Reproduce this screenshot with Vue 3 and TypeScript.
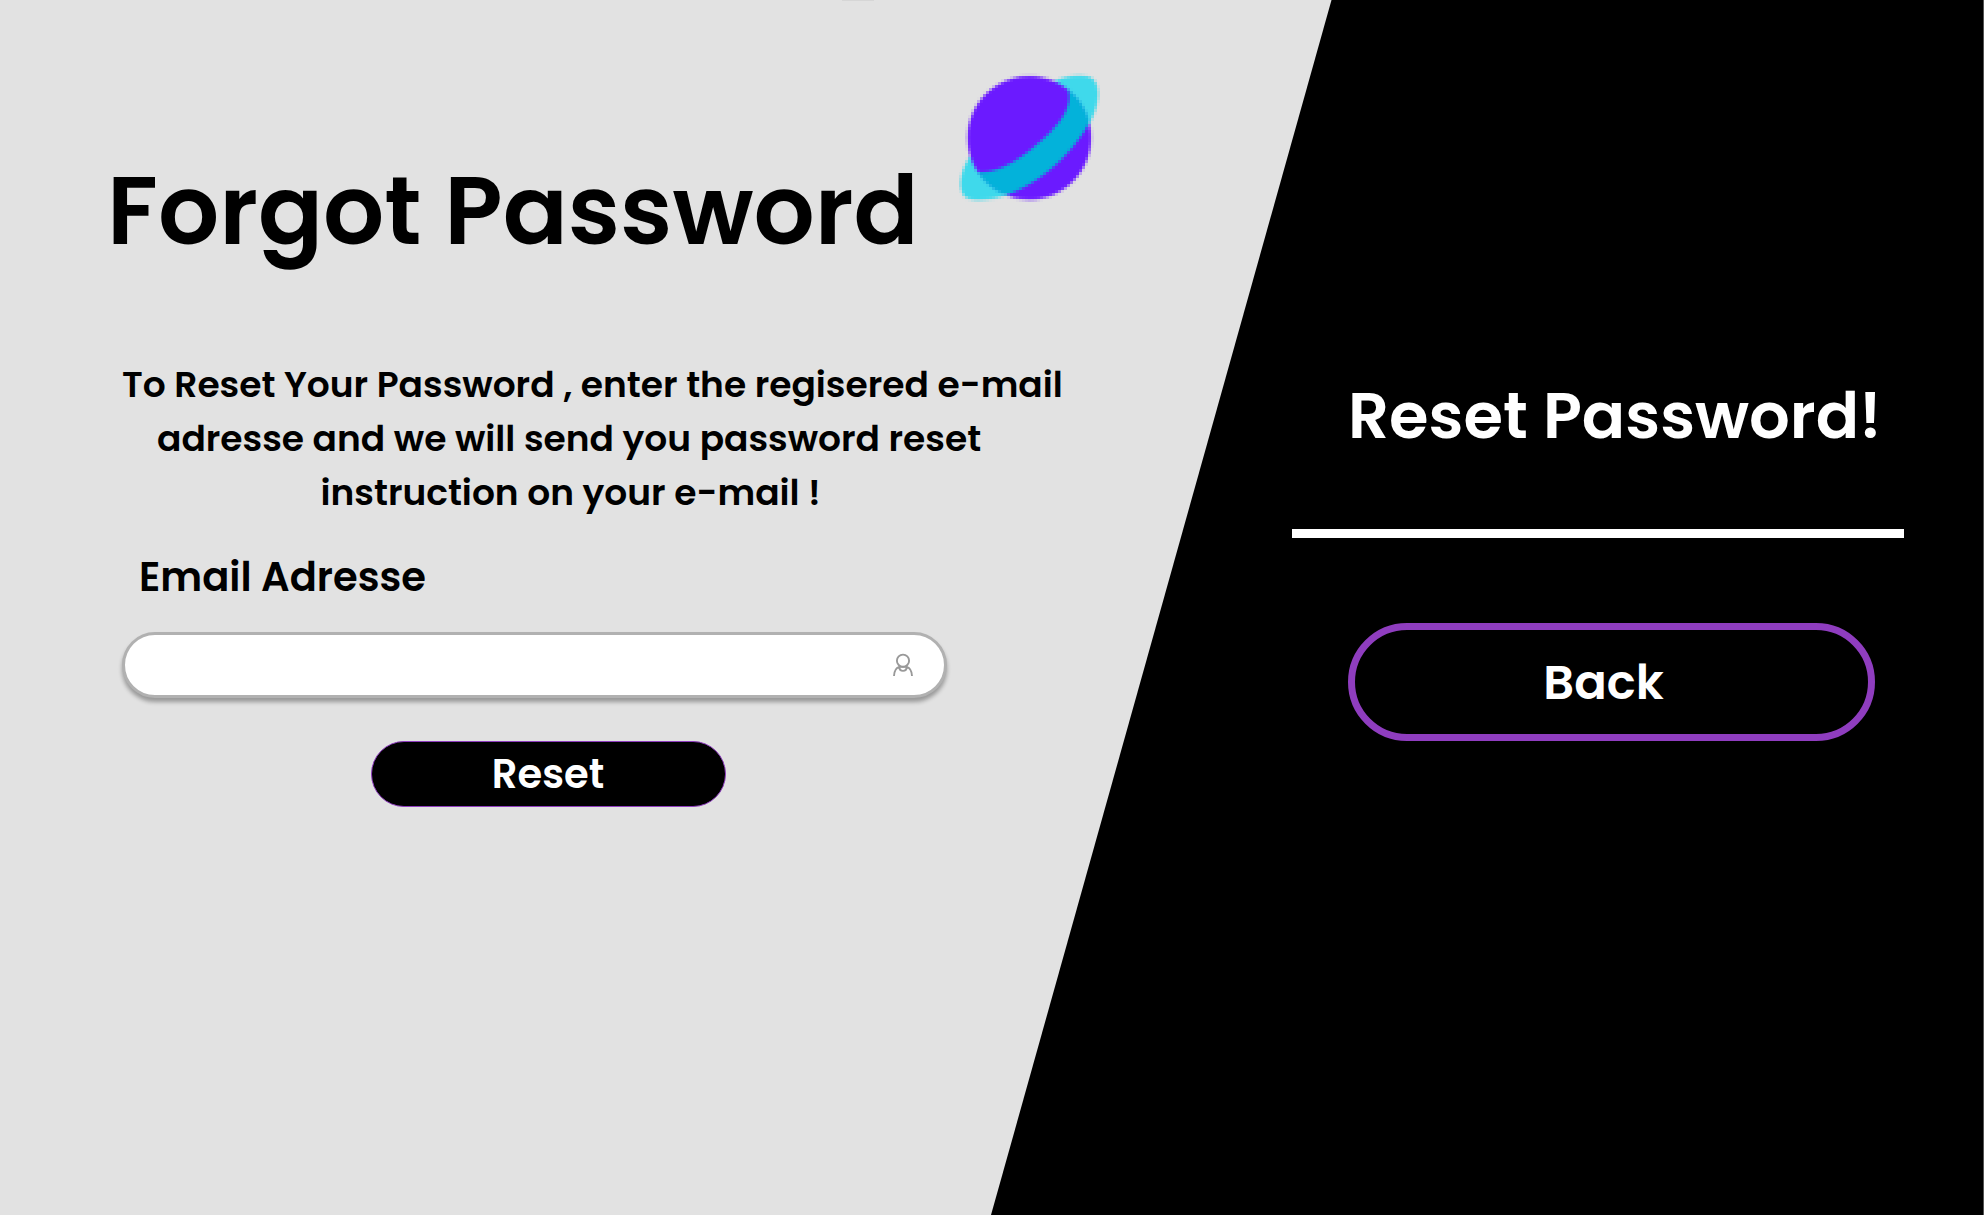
<script setup lang="ts">
import { ref } from 'vue'

const email = ref('')
const lines: string[] = [
  'To Reset Your Password , enter the regisered e-mail',
  'adresse and we will send you password reset',
  'instruction on your e-mail !',
]
</script>

<template>
  <main class="page">
    <section class="form-side">
      <header class="heading">
        <h1>Forgot Password</h1>
        <svg class="planet" viewBox="0 0 180 160" aria-hidden="true">
          <defs>
            <clipPath id="globe"><circle cx="268" cy="233.500" r="185.500" /></clipPath>
            <!-- Samples one point per 3px cell and spreads it over the cell -->
            <filter
              id="pixels"
              filterUnits="userSpaceOnUse"
              primitiveUnits="userSpaceOnUse"
              color-interpolation-filters="sRGB"
              x="1" y="1" width="177" height="156"
            >
              <feGaussianBlur in="SourceGraphic" stdDeviation="1" result="soft" />
              <feFlood x="2" y="2" width="1" height="1" flood-color="#000" result="dot" />
              <feOffset in="dot" x="1" y="1" width="3" height="3" dx="0" dy="0" />
              <feTile result="grid" />
              <feComposite in="soft" in2="grid" operator="in" />
              <feMorphology operator="dilate" radius="1" />
            </filter>
          </defs>
          <g filter="url(#pixels)">
            <g transform="scale(0.33333)">
              <path fill="#3fd9eb" d="M345 62C390 44 440 42 458 56C482 77 480 130 450 188L385 240L200 380L205 403C150 424 90 426 72 407C53 382 60 335 92 285L200 200Z" />
              <circle cx="268" cy="233.500" r="185.500" fill="#6b1aff" />
              <path clip-path="url(#globe)" fill="#03b2da" d="M382 84C406 145 345 210 278 264C224 307 165 343 108 336L120 440L205 403C310 364 400 276 450 185L470 80Z" />
            </g>
          </g>
        </svg>
      </header>
      <p class="intro">
        <span v-for="(line, i) in lines" :key="line" :class="['line', 'line-' + i]">{{ line }}</span>
      </p>
      <form class="form" @submit.prevent>
        <label for="email">Email Adresse</label>
        <div class="field">
          <input id="email" v-model="email" type="email" />
          <svg width="24" height="26" viewBox="0 0 24 26" fill="none" stroke="#999" stroke-width="1.9" aria-hidden="true">
            <circle cx="12" cy="8.700" r="6.100" />
            <path d="M3 24C3.200 19.500 5 16 8.200 14.900H15.800C19 16 20.800 19.500 21 24M8.200 14.900C8.500 20.200 15.500 20.200 15.800 14.900" />
          </svg>
        </div>
        <button class="reset" type="submit">Reset</button>
      </form>
    </section>
    <aside class="back-side">
      <h2>Reset Password!</h2>
      <hr />
      <button class="back" type="button">Back</button>
    </aside>
  </main>
</template>

<style>
body {
  margin: 0;
}
</style>

<style scoped>
* {
  box-sizing: border-box;
}
.page {
  display: flex;
  position: relative;
  width: 1984px;
  height: 1215px;
  overflow: hidden;
  background: #e2e2e2;
  color: #000;
  font-family: Poppins, Inter, sans-serif;
  font-feature-settings: 'cv11';
  font-weight: 600;
}
.page::before {
  content: '';
  position: absolute;
  inset: 0;
  background: linear-gradient(to left, #555 1px, #000 1px);
  clip-path: polygon(1331.5px 0, 100% 0, 100% 100%, 991px 100%);
}
.page::after {
  content: '';
  position: absolute;
  top: 0;
  left: 842px;
  width: 32px;
  height: 1px;
  background: #d6d6d6;
}
.form-side,
.back-side {
  position: relative;
}
.form-side {
  width: 1120px;
  padding-top: 60px;
}
.heading {
  display: flex;
  height: 160px;
}
h1 {
  width: 940px;
  margin: 100px 0 0;
  padding-left: 107px;
  font-size: 96px;
  font-weight: 600;
  line-height: 101px;
  white-space: nowrap;
}
.planet {
  width: 180px;
  height: 160px;
}
.intro {
  margin: 137.5px 0 0;
  font-size: 36px;
  line-height: 54px;
}
.line {
  display: block;
  white-space: nowrap;
}
.line-0 {
  padding-left: 122px;
}
.line-1 {
  padding-left: 157px;
}
.line-2 {
  padding-left: 320.5px;
}
.form {
  display: flex;
  flex-direction: column;
  align-items: flex-start;
  padding-left: 122px;
}
label {
  margin: 27.5px 0 0 17px;
  font-size: 40px;
  line-height: 60px;
}
.field {
  display: flex;
  align-items: center;
  width: 825px;
  height: 66px;
  margin-top: 25px;
  padding: 0 29px;
  border: 3px solid #b1b1b1;
  border-radius: 33px;
  background: #fff;
  box-shadow: 0 4px 4px rgba(0, 0, 0, 0.33);
}
input {
  flex: 1;
  border: 0;
  outline: 0;
  background: none;
  font: inherit;
  font-size: 28px;
}
button {
  padding: 0;
  background: #000;
  color: #fff;
  font: inherit;
  font-feature-settings: inherit;
}
.reset {
  width: 355px;
  height: 66px;
  margin: 43px 0 0 249px;
  padding-right: 1px;
  border: 1px solid #8f3dbf;
  border-radius: 33px;
  font-size: 40px;
}
.back-side {
  padding: 375px 0 0 172px;
  color: #fff;
}
h2 {
  margin: 0;
  padding-left: 56px;
  font-size: 64px;
  font-weight: 600;
  line-height: 81px;
  white-space: nowrap;
}
hr {
  width: 612px;
  height: 9px;
  margin: 73px 0 85px;
  border: 0;
  background: #fff;
}
.back {
  width: 527px;
  height: 118px;
  margin-left: 56px;
  padding: 2px 16px 0 0;
  border: 7px solid #8f3dbf;
  border-radius: 59px;
  font-size: 48px;
}
</style>
